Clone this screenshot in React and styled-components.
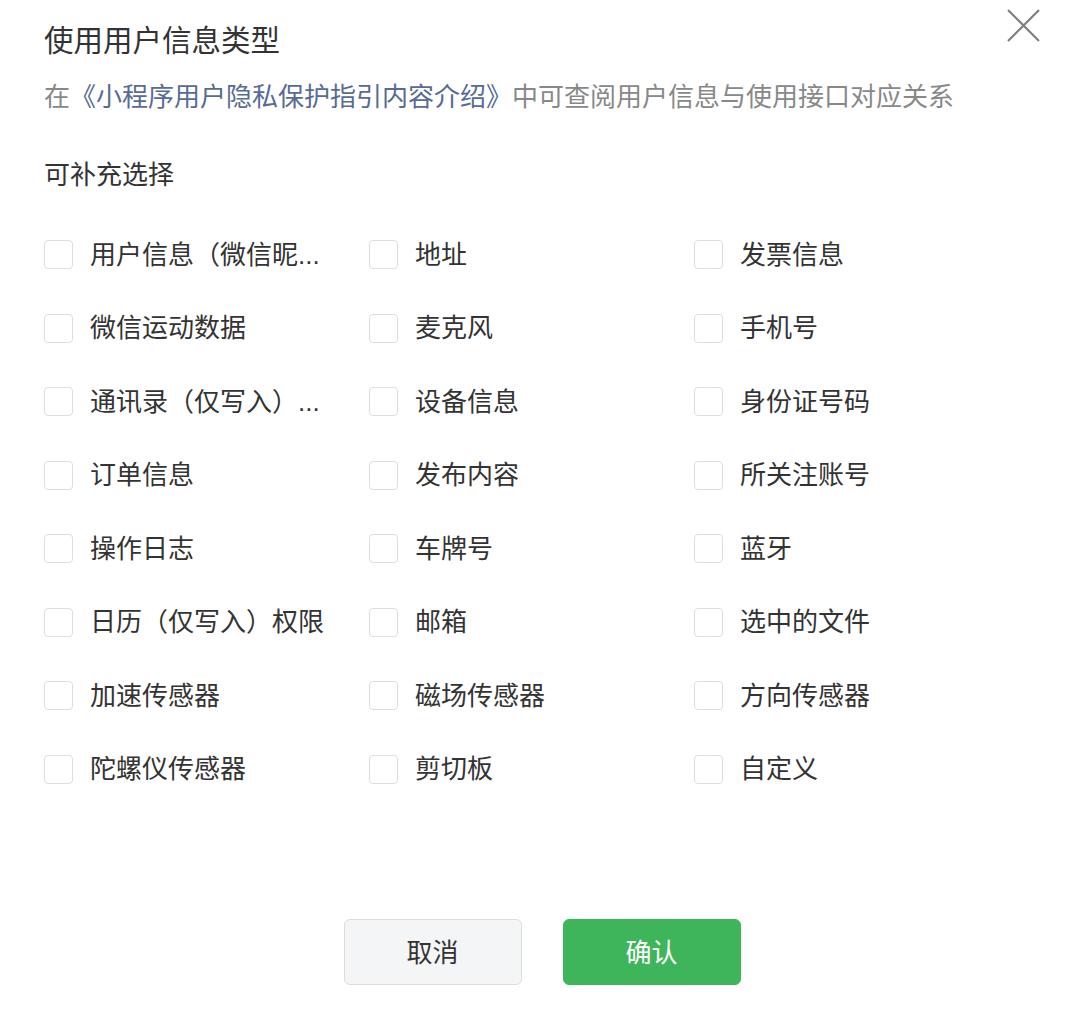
import React from "react";
import styled, { createGlobalStyle } from "styled-components";

const GlobalStyle = createGlobalStyle`
  html, body {
    margin: 0;
    padding: 0;
    background: #ffffff;
  }
  body {
    font-family: "Noto Sans CJK SC", "Noto Sans", sans-serif;
    color: #333333;
  }
  * { box-sizing: border-box; }
`;

const Dialog = styled.div`
  position: relative;
  width: 1080px;
  height: 1021px;
  padding: 18px 44px 0;
  background: #ffffff;
  display: flex;
  flex-direction: column;
`;

const CloseButton = styled.button`
  position: absolute;
  top: 9px;
  right: 40px;
  width: 33px;
  height: 33px;
  padding: 0;
  border: none;
  background: transparent;
  cursor: pointer;
  display: flex;
  align-items: center;
  justify-content: center;
`;

const Title = styled.h1`
  margin: 0;
  font-size: 29.5px;
  line-height: 40px;
  font-weight: 400;
  color: #333333;
`;

const Subtitle = styled.p`
  margin: 19px 0 0;
  font-size: 26px;
  line-height: 36px;
  color: #888888;
  white-space: nowrap;
`;

const Link = styled.a`
  color: #576b95;
  text-decoration: none;
`;

const SectionLabel = styled.div`
  margin-top: 42px;
  font-size: 26px;
  line-height: 36px;
  color: #333333;
`;

const Grid = styled.div`
  margin-top: 27px;
  display: grid;
  grid-template-columns: repeat(3, 325px);
  grid-auto-rows: 73.5px;
`;

const Option = styled.label`
  display: flex;
  align-items: center;
  gap: 17px;
  cursor: pointer;
`;

const Box = styled.span`
  flex: none;
  width: 29px;
  height: 29px;
  border: 1.5px solid #dedede;
  border-radius: 4px;
  background: #ffffff;
`;

const OptionText = styled.span`
  font-family: "Liberation Sans", "Noto Sans CJK SC", sans-serif;
  font-size: 26px;
  line-height: 36px;
  color: #333333;
  white-space: nowrap;
`;

const Footer = styled.div`
  margin-top: 113px;
  padding-left: 4px;
  display: flex;
  justify-content: center;
  gap: 41px;
`;

const Button = styled.button`
  width: 178px;
  height: 66px;
  padding: 0 0 3px;
  border-radius: 6px;
  font-family: "Noto Sans CJK SC", sans-serif;
  font-size: 26px;
  cursor: pointer;
  border: 1.5px solid ${(p) => (p.$primary ? "#3eb55a" : "#dcdcdc")};
  background: ${(p) => (p.$primary ? "#3eb55a" : "#f4f5f7")};
  color: ${(p) => (p.$primary ? "#ffffff" : "#333333")};
`;

const options = [
  "用户信息（微信昵...",
  "地址",
  "发票信息",
  "微信运动数据",
  "麦克风",
  "手机号",
  "通讯录（仅写入）...",
  "设备信息",
  "身份证号码",
  "订单信息",
  "发布内容",
  "所关注账号",
  "操作日志",
  "车牌号",
  "蓝牙",
  "日历（仅写入）权限",
  "邮箱",
  "选中的文件",
  "加速传感器",
  "磁场传感器",
  "方向传感器",
  "陀螺仪传感器",
  "剪切板",
  "自定义",
];

export default function App() {
  return (
    <>
      <GlobalStyle />
      <Dialog>
        <CloseButton aria-label="关闭">
          <svg width="33" height="33" viewBox="0 0 33 33">
            <path d="M1 1 L32 32 M32 1 L1 32" stroke="#7f7f7f" strokeWidth="2.2" fill="none" />
          </svg>
        </CloseButton>
        <Title>使用用户信息类型</Title>
        <Subtitle>
          在<Link href="#">《小程序用户隐私保护指引内容介绍》</Link>中可查阅用户信息与使用接口对应关系
        </Subtitle>
        <SectionLabel>可补充选择</SectionLabel>
        <Grid>
          {options.map((o) => (
            <Option key={o}>
              <Box />
              <OptionText>{o}</OptionText>
            </Option>
          ))}
        </Grid>
        <Footer>
          <Button>取消</Button>
          <Button $primary>确认</Button>
        </Footer>
      </Dialog>
    </>
  );
}
